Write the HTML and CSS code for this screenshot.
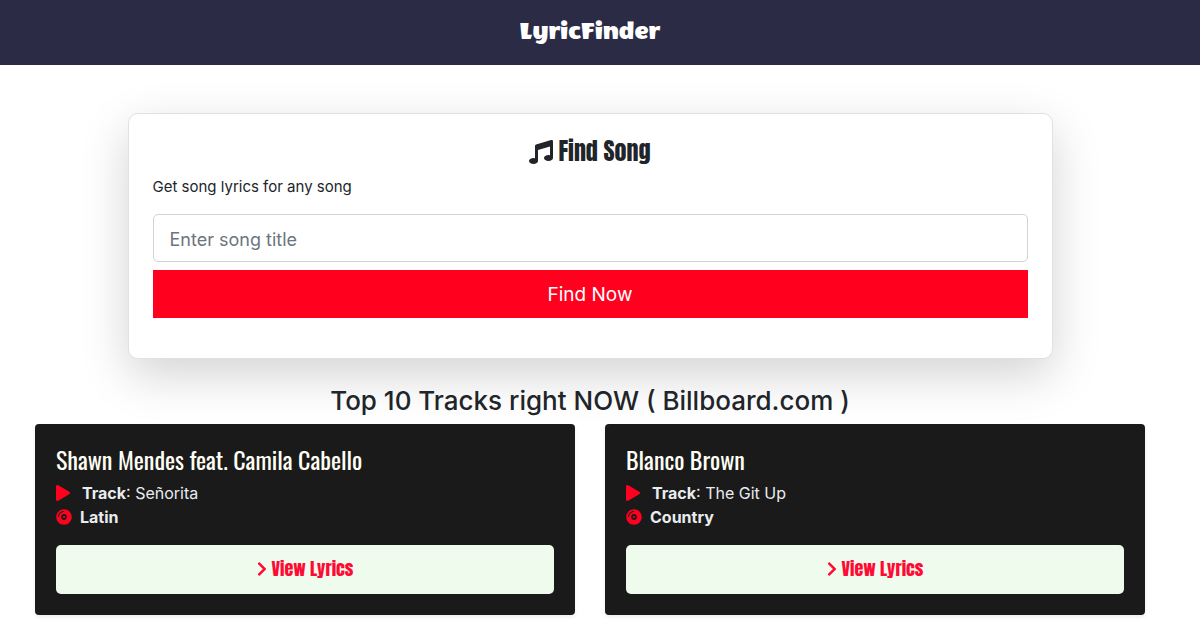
FILE: index.html
```html
<!DOCTYPE html>
<html lang="en">
<head>
<meta charset="utf-8">
<meta name="viewport" content="width=device-width, initial-scale=1">
<title>LyricFinder</title>
<link rel="stylesheet" href="styles.css">
</head>
<body>
<svg class="sprite" aria-hidden="true">
  <symbol id="music" viewBox="0 0 512 512"><path d="M470.38 1.51L150.41 96A32 32 0 0 0 128 126.51v261.41A139 139 0 0 0 96 384c-53 0-96 28.66-96 64s43 64 96 64 96-28.66 96-64V214.32l256-75v184.61a138.4 138.4 0 0 0-32-3.93c-53 0-96 28.66-96 64s43 64 96 64 96-28.65 96-64V32a32 32 0 0 0-41.62-30.49z"/></symbol>
  <symbol id="play" viewBox="0 0 448 512"><path d="M424.4 214.7L72.4 6.6C43.8-10.3 0 6.1 0 47.9V464c0 37.5 40.7 60.1 72.4 41.3l352-208c31.4-18.5 31.5-64.1 0-82.6z"/></symbol>
  <symbol id="disc" viewBox="0 0 496 512"><path fill-rule="evenodd" d="M248 8C111 8 0 119 0 256s111 248 248 248 248-111 248-248S385 8 248 8zM88 256H56c0-105.900 86.100-192 192-192v32c-88.200 0-160 71.800-160 160zm160 96c-53 0-96-43-96-96s43-96 96-96 96 43 96 96-43 96-96 96zm0-128c-17.700 0-32 14.300-32 32s14.300 32 32 32 32-14.300 32-32-14.300-32-32-32z"/></symbol>
  <symbol id="chevron" viewBox="0 0 320 512"><path d="M285.476 272.971L91.132 467.314c-9.373 9.373-24.569 9.373-33.941 0l-22.667-22.667c-9.357-9.357-9.375-24.522-.04-33.901L188.505 256 34.484 101.255c-9.335-9.379-9.317-24.544.04-33.901l22.667-22.667c9.373-9.373 24.569-9.373 33.941 0L285.475 239.030c9.373 9.372 9.373 24.568.001 33.941z"/></symbol>
</svg>
<nav class="navbar"><a class="brand" href="#">LyricFinder</a></nav>
<main class="page">
  <form class="search">
    <h1 class="search-title"><svg class="icon-music"><use href="#music"/></svg><span>Find Song</span></h1>
    <label class="lead" for="song">Get song lyrics for any song</label>
    <input class="song-input" id="song" type="text" placeholder="Enter song title">
    <button class="find" type="button">Find Now</button>
  </form>
  <h2 class="heading">Top 10 Tracks right NOW ( Billboard.com )</h2>
  <section class="tracks">
    <article class="card">
      <h3 class="artist">Shawn Mendes feat. Camila Cabello</h3>
      <p class="line track"><svg class="icon-play"><use href="#play"/></svg><span><strong>Track</strong>: Señorita</span></p>
      <p class="line genre"><svg class="icon-disc"><use href="#disc"/></svg><strong>Latin</strong></p>
      <a class="view" href="#"><svg class="icon-chevron"><use href="#chevron"/></svg><span>View Lyrics</span></a>
    </article>
    <article class="card">
      <h3 class="artist">Blanco Brown</h3>
      <p class="line track"><svg class="icon-play"><use href="#play"/></svg><span><strong>Track</strong>: The Git Up</span></p>
      <p class="line genre"><svg class="icon-disc"><use href="#disc"/></svg><strong>Country</strong></p>
      <a class="view" href="#"><svg class="icon-chevron"><use href="#chevron"/></svg><span>View Lyrics</span></a>
    </article>
  </section>
</main>
</body>
</html>
```
FILE: styles.css
```css
* { box-sizing: border-box; }
body { margin: 0; background: #fff; color: #212529; font: 16px/24px Inter, "Liberation Sans", sans-serif; }
h1, h2, h3, p { margin: 0; }
svg { fill: currentColor; flex: none; }
.sprite { display: none; }
.navbar { display: flex; justify-content: center; align-items: center; min-height: 65px; padding: 0 20px 2px 0; background: #2c2b45; }
.brand { color: #fff; font: 400 26px/30px "Wendy One", Inter, sans-serif; text-decoration: none; }
.page { padding: 48px 20px 16px 0; }
.search { display: flex; flex-direction: column; width: 94%; max-width: 925px; margin: 0 auto 24px; padding: 23px 24px 40px; border: 1px solid #dee2e6; border-radius: 10px; background: #fff; box-shadow: 0 16px 48px rgba(0, 0, 0, .176); }
.search-title { display: flex; justify-content: center; align-items: center; gap: 5px; margin-bottom: 9px; font: 400 24px/29px Anton, sans-serif; }
.icon-music { width: 24px; height: 24px; }
.lead { margin-bottom: 15px; font-size: 15px; }
.song-input { width: 100%; height: 48px; padding: 9px 16px 7px; border: 1px solid #ced4da; border-radius: 5px; background: #fff; color: #495057; font: 18px/30px Inter, sans-serif; }
.song-input::placeholder { color: #6c757d; opacity: 1; }
.find { height: 48px; margin-top: 8px; padding: 2px 16px 0; border: 0; background: #ff001f; color: #fff; font: 19px/30px Inter, sans-serif; }
.heading { padding-top: 1px; margin-bottom: 6px; text-align: center; font: 500 26px/34px Inter, sans-serif; }
.tracks { display: grid; grid-template-columns: 1fr 1fr; gap: 30px; padding: 0 35px; }
.card { padding: 20px 21px 21px; border-radius: 4px; background: #1a1a1a; color: #f8f9fa; box-shadow: 0 2px 4px rgba(0, 0, 0, .075); }
.artist { margin-bottom: 7px; color: #fffff5; font: 400 24px/30px Oswald, sans-serif; }
.line { display: flex; align-items: center; color: #e9ecef; }
.track { gap: 12px; }
.genre { gap: 8px; }
.icon-play { width: 14px; height: 16px; color: #ff001f; }
.icon-disc { width: 16px; height: 16px; color: #ff001f; }
.view { display: flex; justify-content: center; align-items: center; gap: 5px; min-height: 49px; margin-top: 16px; padding-bottom: 2px; border-radius: 5px; background: #effbed; color: #ff0a35; font: 400 18px/24px Anton, sans-serif; text-decoration: none; }
.icon-chevron { width: 10px; height: 18px; }
```
